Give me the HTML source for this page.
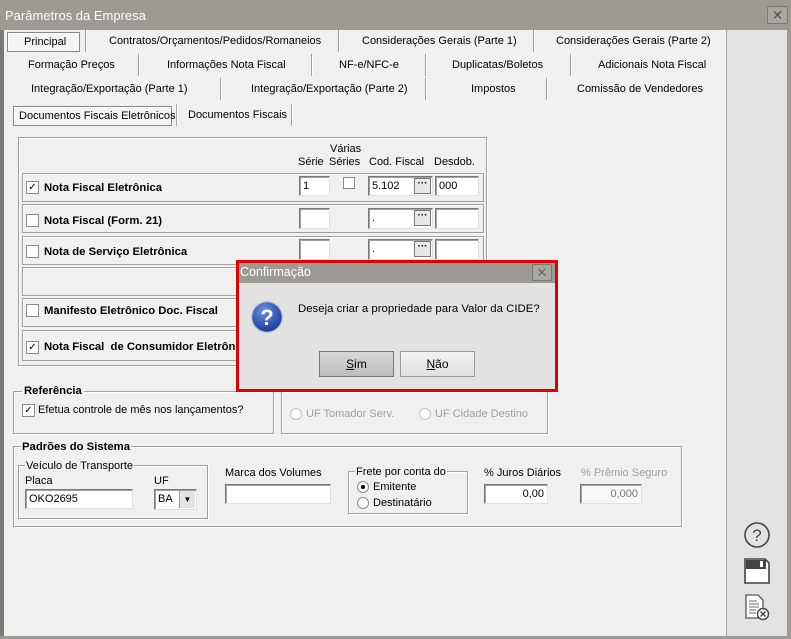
<!DOCTYPE html>
<html><head><meta charset="utf-8"><style>
*{box-sizing:border-box;margin:0;padding:0}
body{width:791px;height:639px;overflow:hidden;background:#f0f0f0;font-family:"Liberation Sans","DejaVu Sans",sans-serif;font-size:11px;color:#000;position:relative}
.a{position:absolute;white-space:nowrap}
.sep{position:absolute;width:2px;border-left:1px solid #a0a0a0;border-right:1px solid #fff}
.box{position:absolute;border:1px solid #a0a0a0;box-shadow:1px 1px 0 #fff inset,1px 1px 0 #fff}
.inp{position:absolute;background:#fff;border:1px solid #7a7a7a;border-right-color:#e0e0e0;border-bottom-color:#e0e0e0;box-shadow:1px 1px 0 #a0a0a0 inset;padding:3px 3px;font-size:11px}
.cb{position:absolute;width:13px;height:13px;background:#fff;border:1px solid #8a8a8a;font-size:10px;line-height:11px;text-align:center;font-weight:bold}
.row{position:absolute;left:22px;width:462px;border:1px solid #a0a0a0;box-shadow:1px 1px 0 #fff inset}
.b{font-weight:bold;font-size:11.3px}
.rad{position:absolute;width:12px;height:12px;border-radius:50%;border:1px solid #8a8a8a;background:#fff}
.dots{position:absolute;right:1px;top:1px;width:17px;height:16px;background:#e8e8e8;border:1px solid #777;font-size:10px;line-height:10px;text-align:center;font-weight:bold}
</style></head><body>
<div class="a" style="left:0;top:0;width:791px;height:30px;background:#9b9b94"></div>
<div class="a" style="left:5px;top:8px;color:#fff;font-size:13px">Parâmetros da Empresa</div>
<div class="a" style="left:767px;top:6px;width:21px;height:18px;border:1px solid #777;border-radius:2px;background:#a8a8a2;color:#555;text-align:center;font-size:14px;line-height:16px;font-weight:bold">✕</div>
<div class="a" style="left:0;top:30px;width:4px;height:609px;background:#7a7a74"></div>
<div class="a" style="left:787px;top:30px;width:4px;height:609px;background:#9b9b94"></div>
<div class="a" style="left:726px;top:30px;width:61px;height:609px;background:#e3e3e3;border-left:1px solid #a0a0a0"></div>
<div class="a" style="left:0;top:636px;width:791px;height:3px;background:#9b9b94"></div>

<div class="a" style="left:7px;top:32px;width:73px;height:20px;border:1px solid #888;background:#f4f4f4;box-shadow:1px 1px 0 #fff inset"></div>
<div class="a" style="left:24px;top:36px">Principal</div>
<div class="sep" style="left:85px;top:30px;height:22px"></div>
<div class="a" style="left:109px;top:35px">Contratos/Orçamentos/Pedidos/Romaneios</div>
<div class="sep" style="left:338px;top:30px;height:22px"></div>
<div class="a" style="left:362px;top:35px">Considerações Gerais (Parte 1)</div>
<div class="sep" style="left:533px;top:30px;height:22px"></div>
<div class="a" style="left:556px;top:35px">Considerações Gerais (Parte 2)</div>
<div class="a" style="left:28px;top:59px">Formação Preços</div>
<div class="sep" style="left:138px;top:54px;height:22px"></div>
<div class="a" style="left:167px;top:59px">Informações Nota Fiscal</div>
<div class="sep" style="left:311px;top:54px;height:22px"></div>
<div class="a" style="left:339px;top:59px">NF-e/NFC-e</div>
<div class="sep" style="left:425px;top:54px;height:22px"></div>
<div class="a" style="left:452px;top:59px">Duplicatas/Boletos</div>
<div class="sep" style="left:570px;top:54px;height:22px"></div>
<div class="a" style="left:598px;top:59px">Adicionais Nota Fiscal</div>
<div class="a" style="left:31px;top:83px">Integração/Exportação (Parte 1)</div>
<div class="sep" style="left:220px;top:78px;height:22px"></div>
<div class="a" style="left:251px;top:83px">Integração/Exportação (Parte 2)</div>
<div class="sep" style="left:425px;top:78px;height:22px"></div>
<div class="a" style="left:471px;top:83px">Impostos</div>
<div class="sep" style="left:546px;top:78px;height:22px"></div>
<div class="a" style="left:577px;top:83px">Comissão de Vendedores</div>
<div class="a" style="left:13px;top:106px;width:159px;height:20px;border:1px solid #888;background:#f4f4f4;box-shadow:1px 1px 0 #fff inset"></div>
<div class="a" style="left:19px;top:110px">Documentos Fiscais Eletrônicos</div>
<div class="sep" style="left:176px;top:104px;height:22px"></div>
<div class="a" style="left:188px;top:109px">Documentos Fiscais</div>
<div class="sep" style="left:291px;top:104px;height:22px"></div>

<div class="box" style="left:18px;top:137px;width:469px;height:229px"></div>
<div class="a" style="left:330px;top:143px">Várias</div>
<div class="a" style="left:298px;top:156px">Série</div>
<div class="a" style="left:329px;top:156px">Séries</div>
<div class="a" style="left:369px;top:156px">Cod. Fiscal</div>
<div class="a" style="left:434px;top:156px">Desdob.</div>

<div class="row" style="top:173px;height:29px"></div>
<div class="cb" style="left:26px;top:181px">✓</div>
<div class="a b" style="left:44px;top:182px">Nota Fiscal Eletrônica</div>
<div class="inp" style="left:299px;top:176px;width:31px;height:20px">1</div>
<div class="a" style="left:343px;top:177px;width:12px;height:12px;border:1px solid #8a8a8a;background:#fff"></div>
<div class="inp" style="left:368px;top:176px;width:65px;height:20px">5.102<div class="dots">···</div></div>
<div class="inp" style="left:435px;top:176px;width:44px;height:20px">000</div>

<div class="row" style="top:204px;height:29px"></div>
<div class="cb" style="left:26px;top:214px"></div>
<div class="a b" style="left:44px;top:215px">Nota Fiscal (Form. 21)</div>
<div class="inp" style="left:299px;top:208px;width:31px;height:21px"></div>
<div class="inp" style="left:368px;top:208px;width:65px;height:21px">.<div class="dots">···</div></div>
<div class="inp" style="left:435px;top:208px;width:44px;height:21px"></div>

<div class="row" style="top:236px;height:29px"></div>
<div class="cb" style="left:26px;top:245px"></div>
<div class="a b" style="left:44px;top:246px">Nota de Serviço Eletrônica</div>
<div class="inp" style="left:299px;top:239px;width:31px;height:21px"></div>
<div class="inp" style="left:368px;top:239px;width:65px;height:21px">.<div class="dots">···</div></div>
<div class="inp" style="left:435px;top:239px;width:44px;height:21px"></div>

<div class="row" style="top:267px;height:29px"></div>
<div class="row" style="top:298px;height:29px"></div>
<div class="cb" style="left:26px;top:304px"></div>
<div class="a b" style="left:44px;top:305px">Manifesto Eletrônico Doc. Fiscal</div>
<div class="row" style="top:330px;height:31px"></div>
<div class="cb" style="left:26px;top:341px">✓</div>
<div class="a b" style="left:44px;top:341px">Nota Fiscal&nbsp; de Consumidor Eletrônica</div>

<div class="box" style="left:13px;top:391px;width:261px;height:43px"></div>
<div class="a b" style="left:22px;top:385px;background:#f0f0f0;padding:0 2px">Referência</div>
<div class="cb" style="left:22px;top:404px">✓</div>
<div class="a" style="left:38px;top:404px">Efetua controle de mês nos lançamentos?</div>
<div class="box" style="left:281px;top:391px;width:267px;height:43px"></div>
<div class="rad" style="left:290px;top:408px;border-color:#c0c0c0"></div>
<div class="a" style="left:306px;top:408px;color:#a0a0a0">UF Tomador Serv.</div>
<div class="rad" style="left:419px;top:408px;border-color:#c0c0c0"></div>
<div class="a" style="left:435px;top:408px;color:#a0a0a0">UF Cidade Destino</div>

<div class="box" style="left:13px;top:446px;width:669px;height:81px"></div>
<div class="a b" style="left:21px;top:441px;background:#f0f0f0;padding:0 1px">Padrões do Sistema</div>
<div class="box" style="left:18px;top:465px;width:190px;height:54px"></div>
<div class="a" style="left:25px;top:460px;background:#f0f0f0;padding:0 1px">Veículo de Transporte</div>
<div class="a" style="left:25px;top:475px">Placa</div>
<div class="inp" style="left:25px;top:489px;width:108px;height:20px">OKO2695</div>
<div class="a" style="left:154px;top:475px">UF</div>
<div class="inp" style="left:154px;top:489px;width:43px;height:21px">BA<div class="a" style="right:1px;top:1px;width:16px;height:17px;background:#e4e4e4;border-left:1px solid #999;font-size:8px;text-align:center;line-height:17px">▼</div></div>
<div class="a" style="left:225px;top:467px">Marca dos Volumes</div>
<div class="inp" style="left:225px;top:484px;width:106px;height:20px"></div>
<div class="box" style="left:348px;top:471px;width:120px;height:43px"></div>
<div class="a" style="left:355px;top:466px;background:#f0f0f0;padding:0 1px">Frete por conta do</div>
<div class="rad" style="left:357px;top:481px"><div class="a" style="left:3px;top:3px;width:4px;height:4px;border-radius:50%;background:#000"></div></div>
<div class="a" style="left:373px;top:481px">Emitente</div>
<div class="rad" style="left:357px;top:497px"></div>
<div class="a" style="left:373px;top:497px">Destinatário</div>
<div class="a" style="left:484px;top:467px">% Juros Diários</div>
<div class="inp" style="left:484px;top:484px;width:64px;height:20px;text-align:right">0,00</div>
<div class="a" style="left:581px;top:467px;color:#a0a0a0">% Prêmio Seguro</div>
<div class="inp" style="left:580px;top:484px;width:62px;height:20px;text-align:right;color:#777;background:#f8f8f8">0,000</div>

<svg class="a" style="left:743px;top:521px" width="28" height="28" viewBox="0 0 28 28"><circle cx="14" cy="14" r="12" fill="none" stroke="#444" stroke-width="1.6"/><text x="14" y="20" text-anchor="middle" font-family="Liberation Sans" font-size="17" fill="#444">?</text></svg>
<svg class="a" style="left:744px;top:558px" width="26" height="26" viewBox="0 0 26 26"><path d="M1 1H21L25 5V25H1Z" fill="#fff" stroke="#444" stroke-width="1.6"/><rect x="2" y="2" width="20" height="9" fill="#444"/><rect x="16" y="3" width="3" height="6" fill="#fff"/></svg>
<svg class="a" style="left:745px;top:594px" width="26" height="28" viewBox="0 0 26 28"><path d="M1 1H13L18 6V24H1Z" fill="#fff" stroke="#555" stroke-width="1.3"/><path d="M4 7H12M4 10H14M4 13H14M4 16H11M4 19H11" stroke="#666"/><circle cx="18" cy="20" r="5.5" fill="#fff" stroke="#444" stroke-width="1.4"/><path d="M15.5 17.5L20.5 22.5M20.5 17.5L15.5 22.5" stroke="#444" stroke-width="1.4"/></svg>

<div class="a" style="left:236px;top:260px;width:322px;height:132px;border:3px solid #e00000;background:#e2e2e2"></div>
<div class="a" style="left:239px;top:263px;width:316px;height:20px;background:#9b9b94"></div>
<div class="a" style="left:240px;top:265px;color:#fff;font-size:12.5px">Confirmação</div>
<div class="a" style="left:532px;top:264px;width:20px;height:17px;border:1px solid #777;border-radius:2px;background:#a8a8a2;color:#666;font-size:13px;line-height:15px;text-align:center;font-weight:bold">✕</div>
<svg class="a" style="left:250px;top:300px" width="34" height="34" viewBox="0 0 34 34"><defs><radialGradient id="g" cx="40%" cy="30%" r="70%"><stop offset="0" stop-color="#6b8fe0"/><stop offset="1" stop-color="#1a3a9a"/></radialGradient></defs><circle cx="17" cy="17" r="15.5" fill="url(#g)" stroke="#c8c8d0" stroke-width="1.5"/><text x="17" y="25" text-anchor="middle" font-family="Liberation Sans" font-weight="bold" font-size="22" fill="#fff">?</text></svg>
<div class="a" style="left:298px;top:303px;font-size:11.4px">Deseja criar a propriedade para Valor da CIDE?</div>
<div class="a" style="left:319px;top:351px;width:75px;height:26px;border:1px solid #777;background:linear-gradient(#d8d8d8,#bdbdbd);text-align:center;line-height:24px;font-size:12px"><u>S</u>im</div>
<div class="a" style="left:400px;top:351px;width:75px;height:26px;border:1px solid #999;background:linear-gradient(#f2f2f2,#e0e0e0);text-align:center;line-height:24px;font-size:12px"><u>N</u>ão</div>
</body></html>
